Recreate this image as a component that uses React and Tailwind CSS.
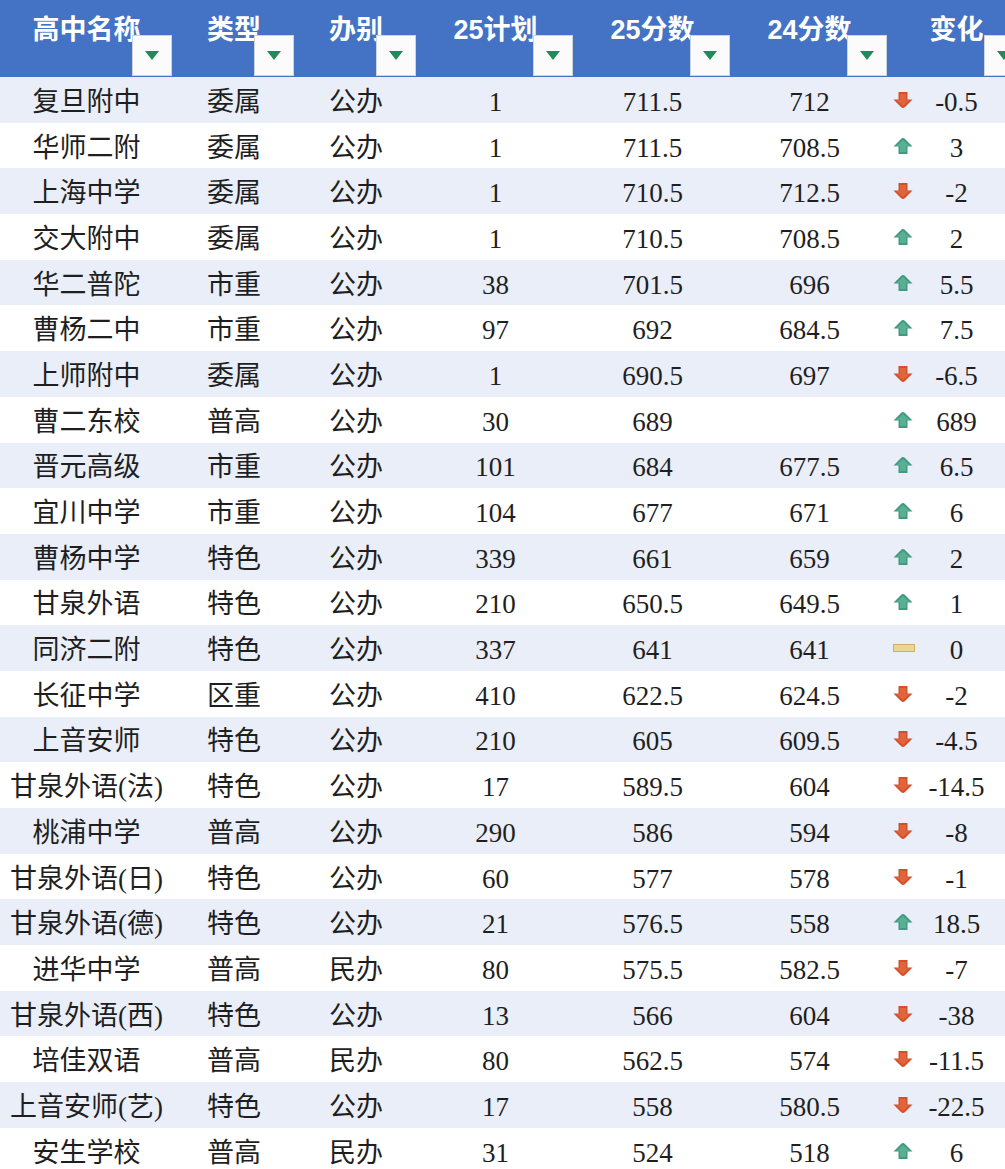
import React from "react";

const columns = ["高中名称", "类型", "办别", "25计划", "25分数", "24分数", "变化"];

// name, type, kind, plan, score25, score24, trend, delta
const rows = [
  ["复旦附中", "委属", "公办", "1", "711.5", "712", "down", "-0.5"],
  ["华师二附", "委属", "公办", "1", "711.5", "708.5", "up", "3"],
  ["上海中学", "委属", "公办", "1", "710.5", "712.5", "down", "-2"],
  ["交大附中", "委属", "公办", "1", "710.5", "708.5", "up", "2"],
  ["华二普陀", "市重", "公办", "38", "701.5", "696", "up", "5.5"],
  ["曹杨二中", "市重", "公办", "97", "692", "684.5", "up", "7.5"],
  ["上师附中", "委属", "公办", "1", "690.5", "697", "down", "-6.5"],
  ["曹二东校", "普高", "公办", "30", "689", "", "up", "689"],
  ["晋元高级", "市重", "公办", "101", "684", "677.5", "up", "6.5"],
  ["宜川中学", "市重", "公办", "104", "677", "671", "up", "6"],
  ["曹杨中学", "特色", "公办", "339", "661", "659", "up", "2"],
  ["甘泉外语", "特色", "公办", "210", "650.5", "649.5", "up", "1"],
  ["同济二附", "特色", "公办", "337", "641", "641", "flat", "0"],
  ["长征中学", "区重", "公办", "410", "622.5", "624.5", "down", "-2"],
  ["上音安师", "特色", "公办", "210", "605", "609.5", "down", "-4.5"],
  ["甘泉外语(法)", "特色", "公办", "17", "589.5", "604", "down", "-14.5"],
  ["桃浦中学", "普高", "公办", "290", "586", "594", "down", "-8"],
  ["甘泉外语(日)", "特色", "公办", "60", "577", "578", "down", "-1"],
  ["甘泉外语(德)", "特色", "公办", "21", "576.5", "558", "up", "18.5"],
  ["进华中学", "普高", "民办", "80", "575.5", "582.5", "down", "-7"],
  ["甘泉外语(西)", "特色", "公办", "13", "566", "604", "down", "-38"],
  ["培佳双语", "普高", "民办", "80", "562.5", "574", "down", "-11.5"],
  ["上音安师(艺)", "特色", "公办", "17", "558", "580.5", "down", "-22.5"],
  ["安生学校", "普高", "民办", "31", "524", "518", "up", "6"],
];

const TrendIcon = ({ trend }) => {
  if (trend === "up") {
    return (
      <svg className="h-[17px] w-[20px]" viewBox="0 0 20 17">
        <path
          d="M10 0.5Q11 0.5 12 1.5L19.5 9H14.5V16.5H5.5V9H0.5L8 1.5Q9 0.5 10 0.5Z"
          fill="#3f9a80"
        />
        <path d="M10 2.5L16.5 8.5H13V14.5H7V8.5H3.5Z" fill="#5aae93" />
      </svg>
    );
  }
  if (trend === "down") {
    return (
      <svg className="h-[17px] w-[20px]" viewBox="0 0 20 17">
        <path
          d="M5.5 0.5H14.5V8H19.5L12 15.5Q11 16.5 10 16.5Q9 16.5 8 15.5L0.5 8H5.5Z"
          fill="#d4502a"
        />
        <path d="M7 2.5H13V8.5H16.5L10 14.5L3.5 8.5H7Z" fill="#e0653d" />
      </svg>
    );
  }
  return (
    <svg className="h-[8px] w-[22px]" viewBox="0 0 22 8">
      <rect x="0.5" y="0.5" width="21" height="7" fill="#ecd693" stroke="#cdb263" />
    </svg>
  );
};

const FilterButton = () => (
  <div className="absolute bottom-[1px] right-[1px] flex h-[41px] w-[40px] items-center justify-center border border-[#cfd3da] bg-[#fbfbfc]">
    <svg className="h-[9px] w-[14px]" viewBox="0 0 14 9">
      <path d="M0 0H14L7 9Z" fill="#1f8a5a" />
    </svg>
  </div>
);

export default function App() {
  return (
    <div
      className="h-[1169px] w-[1005px] overflow-hidden bg-white"
      style={{ fontFamily: '"Liberation Serif", "Noto Sans CJK SC", serif' }}
    >
      <div className="grid w-[1025px] grid-cols-[173px_122px_122px_157px_157px_157px_137px]">
        {columns.map((col) => (
          <div
            key={col}
            className="relative flex h-[77px] justify-center bg-[#4472c4] pt-[12px] text-[27px] font-bold leading-[36px] text-white"
            style={{ fontFamily: '"Liberation Sans", "Noto Sans CJK SC", sans-serif' }}
          >
            {col}
            <FilterButton />
          </div>
        ))}

        {rows.map((row, i) => {
          const stripe = i % 2 === 0 ? "bg-[#e9eef8]" : "bg-white";
          const cells = row.slice(0, 6);
          return (
            <React.Fragment key={row[0]}>
              {cells.map((value, j) => (
                <div
                  key={j}
                  className={`flex h-[45.7px] items-center justify-center whitespace-nowrap pt-[5px] text-[27px] leading-none text-[#1f1f1f] ${stripe}`}
                >
                  {value}
                </div>
              ))}
              <div
                className={`relative flex h-[45.7px] items-center justify-center pt-[5px] text-[27px] leading-none text-[#1f1f1f] ${stripe}`}
              >
                <span className="absolute left-[5px] top-1/2 flex -translate-y-1/2 items-center">
                  <TrendIcon trend={row[6]} />
                </span>
                {row[7]}
              </div>
            </React.Fragment>
          );
        })}
      </div>
    </div>
  );
}
